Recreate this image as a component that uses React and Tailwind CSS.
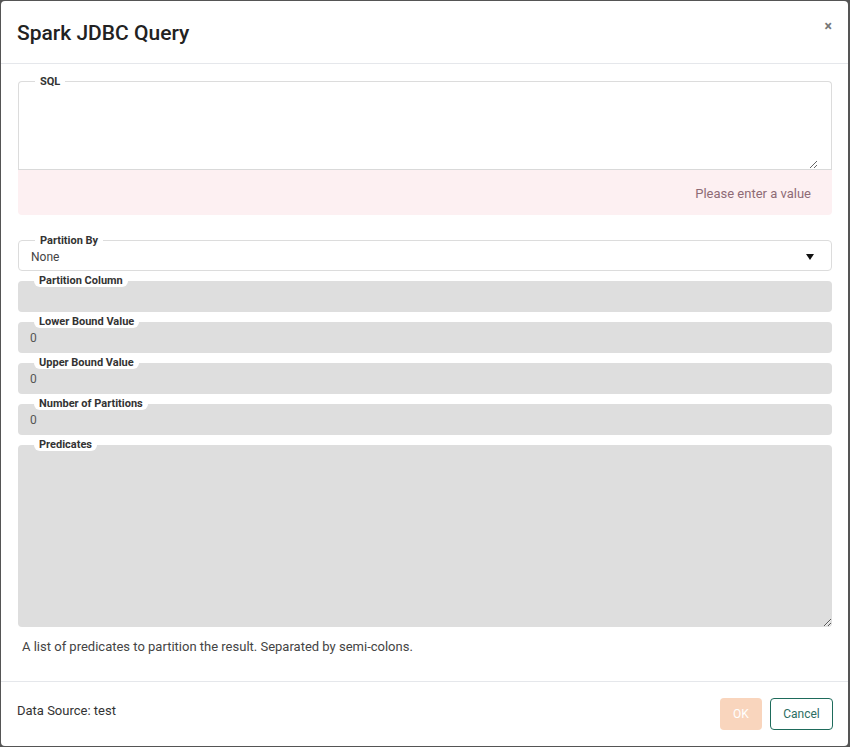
import React from 'react';

let Legend = ({ children, notch }) => (
  <legend
    className={`ml-[2px] px-[5px] text-[11px] leading-[13px] font-bold text-[#333] ${
      notch ? 'bg-white rounded-b-[6px]' : ''
    }`}
  >
    {children}
  </legend>
);

let GrayField = ({ label, value }) => (
  <fieldset className="border-0 bg-[#dedede] rounded-[4px] pl-[14px] h-[38px] mb-[3px]">
    <Legend notch>{label}</Legend>
    <div className="-ml-[2px] pt-[3px] text-[12px] leading-[14px] text-[#555]">{value}</div>
  </fieldset>
);

let App = () => {
  return (
    <div className="w-[850px] h-[747px] bg-[#555] pt-px pl-px pr-[2px] pb-px font-['Roboto',sans-serif]">
      <div className="flex flex-col w-full h-full bg-white rounded-[4px] overflow-hidden">
        <div className="flex items-center justify-between h-[63px] border-b border-[#e5e7eb] pl-[16px] pr-[16px]">
          <div className="text-[21px] leading-[24px] font-medium text-[#222] pt-[2px]">Spark JDBC Query</div>
          <div className="text-[14px] leading-none font-bold text-[#777] -mt-[12px] mr-0">×</div>
        </div>

        <div className="flex flex-col pl-[17px] pr-[16px] pt-[11px]">
          <fieldset className="border border-[#dcdcdc] border-b-[#d9d9d9] rounded-t-[4px] pl-[14px] pr-0">
            <Legend>SQL</Legend>
            <textarea className="block w-[calc(100%+1px)] -ml-[14px] h-[81px] border-0 outline-none resize-y bg-transparent" />
          </fieldset>
          <div className="h-[45px] bg-[#fdf0f2] rounded-b-[4px] flex items-center justify-end pr-[21px] pt-[2px] text-[13px] text-[#8e6b76]">
            Please enter a value
          </div>

          <fieldset className="mt-[19px] border border-[#dcdcdc] rounded-[4px] pl-[14px] h-[37px] mb-[3px]">
            <Legend>Partition By</Legend>
            <div className="flex items-center justify-between -ml-[2px] pt-[3px] pr-[17px] text-[12px] leading-[14px] text-[#444]">
              <span>None</span>
              <svg width="8" height="6" viewBox="0 0 8 6">
                <path d="M0 0h8L4 6z" fill="#111" />
              </svg>
            </div>
          </fieldset>

          <GrayField label="Partition Column" value="" />
          <GrayField label="Lower Bound Value" value="0" />
          <GrayField label="Upper Bound Value" value="0" />
          <GrayField label="Number of Partitions" value="0" />

          <fieldset className="border-0 bg-[#dedede] rounded-[4px] pl-[14px]">
            <Legend notch>Predicates</Legend>
            <textarea className="block w-[calc(100%+14px)] -ml-[14px] h-[176px] border-0 outline-none resize-y bg-transparent" />
          </fieldset>
          <div className="pl-[4px] pt-[12px] text-[13px] leading-[15px] text-[#444]">
            A list of predicates to partition the result. Separated by semi-colons.
          </div>
        </div>

        <div className="mt-auto border-t border-[#e5e7eb] h-[65px] flex items-center justify-between pl-[16px] pr-[15px]">
          <div className="text-[13px] text-[#333] -mt-[6px]">Data Source: test</div>
          <div className="flex gap-[8px] -mt-[1px]">
            <button className="w-[42px] h-[32px] rounded-[4px] bg-[#f9d5bd] text-white text-[12px]">OK</button>
            <button className="w-[63px] h-[32px] rounded-[4px] border border-[#1e6b5b] text-[#2b6d62] text-[12px]">
              Cancel
            </button>
          </div>
        </div>
      </div>
    </div>
  );
};

export default App;
